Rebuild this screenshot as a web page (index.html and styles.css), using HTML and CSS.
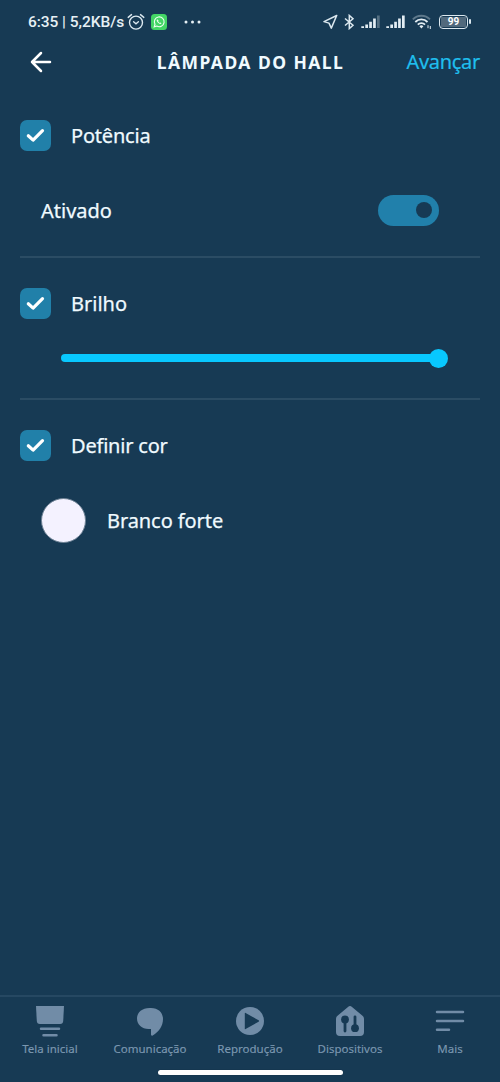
FILE: index.html
```html
<!DOCTYPE html>
<html lang="pt-BR">
<head>
<meta charset="utf-8">
<title>Lâmpada do Hall</title>
<link rel="stylesheet" href="styles.css">
</head>
<body>
<div class="screen">
  <div class="status">
    <span class="clock">6:35 | 5,2KB/s</span>
    <svg class="alarm" width="18" height="18" viewBox="0 0 18 18" fill="none" stroke="#dce8ef" stroke-width="1.4" stroke-linecap="round"><circle cx="9" cy="9.6" r="6.5"/><path d="M1.2 4.4 4.5 1.6M16.8 4.4 13.5 1.6M6.6 8.8 9 10.8l2.4-2"/></svg>
    <svg class="whatsapp" width="16" height="16" viewBox="0 0 16 16"><rect width="16" height="16" rx="3.5" fill="#43d565"/><path d="M3.2 12.8 4 10.2A4.9 4.9 0 1 1 5.8 12z" fill="none" stroke="#effff2" stroke-width="1.1"/><path d="M6.1 5.3c-1.1 1 .2 2.8 1.3 3.8 1 .9 2.5 1.4 3.1.2l-1.2-.9-.7.5-1.5-1.6.5-.7z" fill="#effff2"/></svg>
    <svg class="dots" width="17" height="4" viewBox="0 0 17 4" fill="#e6f0f5"><circle cx="2" cy="2" r="1.5"/><circle cx="8.5" cy="2" r="1.5"/><circle cx="15" cy="2" r="1.5"/></svg>
    <div class="indicators">
      <svg width="15" height="16" viewBox="0 0 15 16" fill="none" stroke="#dce8ef" stroke-width="1.5" stroke-linejoin="round"><path d="M13.7 1.5 1 7.600l5 1.500 2.300 5z"/></svg>
      <svg class="bluetooth" width="11" height="16" viewBox="0 0 11 16" fill="none" stroke="#dce8ef" stroke-width="1.5"><path d="M1 4.5 9 11.3 5.3 14.6V1.400L9 4.700 1 11.500"/></svg>
      <svg class="signal" width="19" height="14" viewBox="0 0 19 14" fill="#e3edf3"><path d="M.3 11.2h2.700V13H.3zM4.3 9.500h2.700V13H4.300zM8.200 6.700h2.700V13H8.200zM12.100 3.500h2.700V13h-2.700z"/><path d="M16 .5h2.700V13H16z" opacity=".3"/></svg>
      <svg class="signal" width="19" height="14" viewBox="0 0 19 14" fill="#e3edf3"><path d="M.3 11.2h2.700V13H.3zM4.3 9.500h2.700V13H4.300zM8.200 6.700h2.700V13H8.200zM12.100 3.500h2.700V13h-2.700zM16 .5h2.700V13H16z"/></svg>
      <svg class="wifi" width="20" height="16" viewBox="0 0 20 16" fill="none" stroke="#e3edf3" stroke-width="1.8"><path d="M.8 5.4a12 12 0 0 1 17.200 0" opacity=".35"/><path d="M3.3 8a8.6 8.6 0 0 1 12.2 0M5.8 10.7a5 5 0 0 1 7.200 0"/><path d="m7.4 12.2 2 2.3 2-2.3a3 3 0 0 0-4 0z" fill="#e3edf3" stroke="none"/><path d="M16 11.2v3M18.3 12v3" stroke-width="1"/></svg>
      <div class="battery"><span>99</span></div>
    </div>
  </div>

  <header class="header">
    <svg class="back" width="22" height="22" viewBox="0 0 22 22" fill="none" stroke="#fff" stroke-width="2.5" stroke-linecap="round" stroke-linejoin="round"><path d="M20 11H2M11 2 2 11l9 9"/></svg>
    <h1>LÂMPADA DO HALL</h1>
    <a class="next">Avançar</a>
  </header>

  <main>
    <section class="power">
      <div class="option"><span class="check"><svg width="30" height="30" viewBox="0 0 30 30"><path d="m8.3 15.800 4.800 4.300 9.400-9.500"/></svg></span><span class="potencia">Potência</span></div>
      <div class="state"><span>Ativado</span><span class="toggle"><i></i></span></div>
    </section>
    <section class="brightness">
      <div class="option"><span class="check"><svg width="30" height="30" viewBox="0 0 30 30"><path d="m8.3 15.800 4.800 4.300 9.400-9.500"/></svg></span><span>Brilho</span></div>
      <div class="slider"><i></i></div>
    </section>
    <section class="color">
      <div class="option"><span class="check"><svg width="30" height="30" viewBox="0 0 30 30"><path d="m8.3 15.800 4.800 4.300 9.400-9.500"/></svg></span><span class="definir">Definir cor</span></div>
      <div class="choice"><i></i><span>Branco forte</span></div>
    </section>
  </main>

  <footer>
    <nav>
      <a><svg width="32" height="34" viewBox="0 0 32 34"><path d="M2 1h28l-.8 15q-.2 3-3 3H5.800q-2.800 0-3-3z"/><path class="line" d="M7 23.700h18M9.500 30.200h13"/></svg><span>Tela inicial</span></a>
      <a><svg width="32" height="34" viewBox="0 0 32 34"><path d="M15.500 3h1.500C24.500 3 29 7.800 29 14c0 7-4 12.800-10.300 16.500-1 .5-1.700 0-1.700-1v-5.500h-2.500C8 24 3 19.500 3 13.500S8 3 15.500 3z"/></svg><span>Comunicação</span></a>
      <a><svg width="32" height="34" viewBox="0 0 32 34"><circle cx="16" cy="16" r="14"/><path class="hole" d="M10.800 8.300v15.400q0 .8.800.4l13-7.400q1-.7 0-1.400l-13-7.400q-.8-.4-.8.4z"/></svg><span>Reprodução</span></a>
      <a><svg width="32" height="34" viewBox="0 0 32 34"><path d="M14 2q2-1.800 4 0l10.500 8.800q1.500 1.200 1.500 3V27q0 4-4 4H6q-4 0-4-4V13.800q0-1.800 1.500-3z"/><circle class="hole" cx="11" cy="14.500" r="3.900"/><circle class="hole" cx="21" cy="23.200" r="3.900"/><path class="cut" d="M11 15v11M21 23V11.800"/></svg><span>Dispositivos</span></a>
      <a><svg width="32" height="34" viewBox="0 0 32 34"><path class="line" d="M3 7h26M3 15.900h26M3 24.800h12"/></svg><span>Mais</span></a>
    </nav>
    <div class="home-bar"></div>
  </footer>
</div>
</body>
</html>
```
FILE: styles.css
```css
* { box-sizing: border-box; }
body { margin: 0; background: #173a54; }
.screen {
  width: 500px;
  height: 1082px;
  display: flex;
  flex-direction: column;
  background: #173a54;
  color: #f0faff;
  font-family: "Noto Sans", sans-serif;
  font-size: 20px;
}
svg { display: block; flex: none; }

.status { display: flex; align-items: center; height: 43px; padding: 0 29px 0 28px; }
.clock { width: 98px; font: 500 15.5px/20px Roboto, sans-serif; white-space: nowrap; letter-spacing: -.05px; color: #e6f0f5; }
.alarm { margin-left: 1px; }
.whatsapp { margin-left: 6px; }
.dots { margin-left: 17px; }
.indicators { display: flex; align-items: center; margin-left: auto; }
.bluetooth { margin-left: 6px; }
.signal { margin-left: 6px; }
.wifi { margin-left: 7px; }
.battery {
  position: relative;
  width: 29px;
  height: 14px;
  margin: 0 3px 0 7px;
  padding: 1px;
  border: 1.5px solid #dce8ef;
  border-radius: 4px;
}
.battery span { display: block; height: 10px; background: #51697c; font: bold 10px/10px Roboto, sans-serif; text-align: center; color: #fff; }
.battery::after { content: ""; position: absolute; right: -4px; top: 3px; width: 2px; height: 5px; border-radius: 1px; background: #dce8ef; }

.header { display: grid; grid-template-columns: 110px 1fr 110px; align-items: center; height: 38px; padding: 0 20px; }
.back { margin-left: 10px; }
.header h1 { margin: 0; padding: 0 0 1px 1px; font-size: 17.5px; line-height: 24px; font-weight: 700; letter-spacing: 1.45px; text-align: center; white-space: nowrap; }
.next { justify-self: end; padding-bottom: 1px; color: #1fbfee; letter-spacing: -.3px; -webkit-text-stroke: .2px; }

main { flex: 1; padding: 0 20px; -webkit-text-stroke: .25px; }
section { border-bottom: 2px solid #2b4c64; }
.power { height: 177px; padding-top: 38px; }
.brightness { height: 142px; padding-top: 29px; }
.color { padding-top: 29px; border: 0; }
.option { display: flex; align-items: center; gap: 20px; height: 32px; }
.potencia, .definir { letter-spacing: -.2px; }
.check { width: 31px; height: 31px; border-radius: 7px; background: #2180a9; }
.check path { fill: none; stroke: #fff; stroke-width: 3.2; stroke-linecap: round; stroke-linejoin: round; }
.state { display: flex; align-items: center; justify-content: space-between; height: 32px; margin: 43px 41px 0 21px; }
.toggle { display: flex; align-items: center; justify-content: flex-end; width: 61px; height: 31px; padding-right: 7px; border-radius: 16px; background: #2180ab; }
.toggle i { width: 16px; height: 16px; border-radius: 50%; background: #173a54; }
.slider { position: relative; width: 378px; height: 8px; margin: 35px 0 0 41px; border-radius: 4px; background: #08c8ff; }
.slider i { position: absolute; right: -9px; top: -5px; width: 19px; height: 19px; border-radius: 50%; background: #08c8ff; }
.choice { display: flex; align-items: center; gap: 21px; margin: 37px 0 0 21px; letter-spacing: -.08px; }
.choice i { width: 45px; height: 45px; border: 1px solid #6c8093; border-radius: 50%; background: #f4f2ff; }

footer { height: 87px; border-top: 2px solid #264862; }
nav { display: grid; grid-template-columns: repeat(5, 1fr); height: 73px; padding-top: 8px; }
nav a { display: flex; flex-direction: column; align-items: center; color: #7b97b0; font-size: 11.5px; line-height: 16px; -webkit-text-stroke: .15px; }
nav svg { height: 34px; margin-bottom: 2px; fill: #718ca7; }
nav .line { fill: none; stroke: #718ca7; stroke-width: 2.5; stroke-linecap: round; }
nav .hole { fill: #173a54; }
nav .cut { fill: none; stroke: #173a54; stroke-width: 2.8; stroke-linecap: round; }
.home-bar { width: 185px; height: 5px; margin: 0 auto; border-radius: 3px; background: #fff; box-shadow: 0 0 1px #102536; }
```
